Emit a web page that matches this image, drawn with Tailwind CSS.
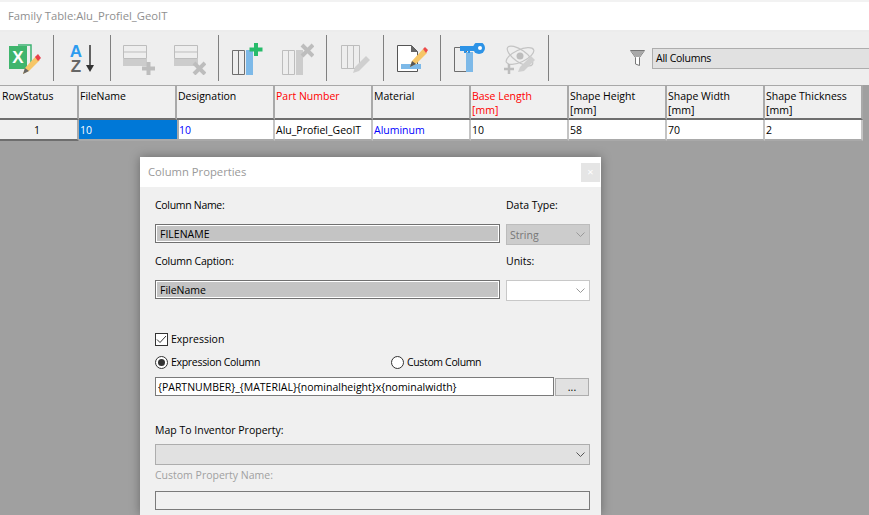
<!DOCTYPE html>
<html lang="en">
<head>
    <meta charset="UTF-8" />
    <title>Family Table</title>
    <script src="https://cdn.jsdelivr.net/npm/@tailwindcss/browser@4"></script>
</head>
<body class="relative w-[869px] h-[515px] overflow-hidden bg-[#a0a0a0] font-['Open_Sans',sans-serif] text-[10.5px] leading-[14px] text-black">
    <!-- title bar -->
    <div class="h-[32px] bg-white border-t-2 border-t-[#f2f2f2] border-b-2 border-b-[#ececec] pl-2 flex items-center text-[11.25px] text-[#8f8f8f]">Family Table:Alu_Profiel_GeoIT</div>

    <!-- toolbar -->
    <div class="h-[53px] pb-px bg-[#eeeeee] flex items-center">
        <svg class="ml-[9px] mt-[2px] shrink-0" width="32" height="32" viewBox="0 0 32 32">
            <path d="M9 2h13v22H9" fill="none" stroke="#3cb371" stroke-width="1.5"/>
            <rect x="0" y="3" width="18" height="23" fill="#3fb56d"/>
            <text x="9" y="20" text-anchor="middle" font-family="Liberation Sans" font-weight="700" font-size="17" fill="#fff">X</text>
            <path d="M14 31l2-6 11-12 4 4-11 11z" fill="#f6c667"/>
            <path d="M14 31l2-6 4 3z" fill="#666"/>
            <path d="M26 14l3-3 3 4-3 3z" fill="#e8414b"/>
        </svg>
        <div class="ml-[12px] w-px h-[46px] bg-[#808080] shrink-0"></div>
        <svg class="ml-[12px] mt-[2px] shrink-0" width="32" height="32" viewBox="0 0 32 32">
            <text x="10" y="14" text-anchor="middle" font-family="Liberation Sans" font-weight="700" font-size="17" fill="#2d9cf0">A</text>
            <text x="10" y="29" text-anchor="middle" font-family="Liberation Sans" font-weight="700" font-size="17" fill="#666">Z</text>
            <path d="M24 2v22" stroke="#333" stroke-width="1.5"/>
            <path d="M20 22h8l-4 7z" fill="#333"/>
        </svg>
        <div class="ml-[12px] w-px h-[46px] bg-[#808080] shrink-0"></div>
        <svg class="ml-[12px] mt-[2px] shrink-0" width="32" height="32" viewBox="0 0 32 32">
            <path d="M0.500 2.500h23v13h-23zM0.500 9h23" fill="none" stroke="#bdbdbd"/>
            <rect x="0" y="16" width="24" height="7" fill="#cccccc"/>
            <path d="M25.500 19v13M19 25.500h13" stroke="#bdbdbd" stroke-width="4"/>
        </svg>
        <svg class="ml-[19px] mt-[2px] shrink-0" width="32" height="32" viewBox="0 0 32 32">
            <path d="M0.500 2.500h23v13h-23zM0.500 9h23" fill="none" stroke="#bdbdbd"/>
            <rect x="0" y="16" width="24" height="7" fill="#cccccc"/>
            <path d="M20 20l11 11M31 20l-11 11" stroke="#bdbdbd" stroke-width="4"/>
        </svg>
        <div class="ml-[12px] w-px h-[46px] bg-[#808080] shrink-0"></div>
        <svg class="ml-[13px] mt-[2px] shrink-0" width="32" height="32" viewBox="0 0 32 32">
            <path d="M0.500 7.500h12v24h-12zM6.500 7.500v24" fill="none" stroke="#6e6e6e"/>
            <rect x="14" y="7" width="7" height="25" fill="#7db9e8"/>
            <path d="M24 0v13M17.500 6.500h13" stroke="#27bb6a" stroke-width="4"/>
        </svg>
        <svg class="ml-[18px] mt-[2px] shrink-0" width="32" height="32" viewBox="0 0 32 32">
            <path d="M0.500 7.500h12v24h-12zM6.500 7.500v24" fill="none" stroke="#bdbdbd"/>
            <rect x="14" y="7" width="7" height="25" fill="#cccccc"/>
            <path d="M20 2l11 11M31 2l-11 11" stroke="#bdbdbd" stroke-width="4"/>
        </svg>
        <div class="ml-[12px] w-px h-[46px] bg-[#808080] shrink-0"></div>
        <svg class="ml-[13px] mt-[2px] shrink-0" width="32" height="32" viewBox="0 0 32 32">
            <path d="M1.500 2.500h18v23h-18zM7.500 2.500v23M13.500 2.500v23" fill="none" stroke="#bdbdbd"/>
            <path d="M13 30l2-6 11-11 4 4-11 11z" fill="#cfcfcf"/>
        </svg>
        <div class="ml-[11px] w-px h-[46px] bg-[#808080] shrink-0"></div>
        <svg class="ml-[13px] mt-[2px] shrink-0" width="32" height="32" viewBox="0 0 32 32">
            <path d="M0.500 2.500h14l6 6v20h-20z" fill="#fff" stroke="#555"/>
            <path d="M14 2l7 7h-7z" fill="#666"/>
            <rect x="4" y="21" width="20" height="5" fill="#7db9e8"/>
            <path d="M13 24l2-6 11-12 4 4-11 11z" fill="#f6c667"/>
            <path d="M13 24l2-6 4 3z" fill="#555"/>
            <path d="M26 6l2-2 3 3-2 3z" fill="#ec4a4a"/>
        </svg>
        <div class="ml-[11px] w-px h-[46px] bg-[#808080] shrink-0"></div>
        <svg class="ml-[13px] mt-[2px] shrink-0" width="32" height="32" viewBox="0 0 32 32">
            <path d="M0.500 4.500h12v24h-12z" fill="none" stroke="#6e6e6e"/>
            <rect x="12" y="9" width="7" height="20" fill="#7db9e8"/>
            <path d="M6 3h16v5h-6v2h-2V8h-2v2h-2V8H6z" fill="#2d93e6"/>
            <circle cx="25" cy="5" r="6" fill="#2d93e6"/>
            <circle cx="26" cy="5" r="2" fill="#fff"/>
        </svg>
        <svg class="ml-[18px] mt-[2px] shrink-0" width="32" height="32" viewBox="0 0 32 32">
            <g fill="none" stroke="#c4c4c4" stroke-width="1.2">
                <ellipse cx="16" cy="13" rx="15" ry="6" transform="rotate(-25 16 13)"/>
                <ellipse cx="16" cy="13" rx="15" ry="6" transform="rotate(35 16 13)"/>
            </g>
            <circle cx="16" cy="13" r="3.500" fill="#bdbdbd"/>
            <path d="M14 29l2-5 11-11 4 4-11 11z" fill="#cfcfcf"/>
            <path d="M5 21v10M0 26h10" stroke="#bdbdbd" stroke-width="2.500"/>
        </svg>
        <div class="ml-[12px] w-px h-[46px] bg-[#808080] shrink-0"></div>
        <svg class="ml-[81px] shrink-0" width="15" height="16" viewBox="0 0 15 16">
            <path d="M0.500 0.500h14l-5 7v8l-4-1.500v-6.500z" fill="#fff" stroke="#777"/>
            <path d="M1 1h13l-4.500 6h-4z" fill="#a8a8a8"/>
        </svg>
        <div class="ml-[7px] w-[230px] h-[21px] shrink-0 bg-[#e1e1e1] border border-[#adadad] pl-[3px] flex items-center tracking-[-0.25px]">All Columns</div>
    </div>

    <!-- family table -->
    <div class="grid grid-cols-[79px_repeat(8,98px)] w-[863px] border-t border-t-[#a8a8a8]">
        <div class="h-[34px] bg-[#f0f0f0] border-r-2 border-r-[#a9a9a9] border-b-2 border-b-[#6e6e6e] pl-[2px] pt-[3px]">RowStatus</div>
        <div class="h-[34px] bg-[#f0f0f0] border-r-2 border-r-[#a9a9a9] border-b-2 border-b-[#6e6e6e] pl-px pt-[3px]">FileName</div>
        <div class="h-[34px] bg-[#f0f0f0] border-r-2 border-r-[#a9a9a9] border-b-2 border-b-[#6e6e6e] pl-px pt-[3px]">Designation</div>
        <div class="h-[34px] bg-[#f0f0f0] border-r-2 border-r-[#a9a9a9] border-b-2 border-b-[#6e6e6e] pl-px pt-[3px] text-[#ff0000]">Part Number</div>
        <div class="h-[34px] bg-[#f0f0f0] border-r-2 border-r-[#a9a9a9] border-b-2 border-b-[#6e6e6e] pl-px pt-[3px]">Material</div>
        <div class="h-[34px] bg-[#f0f0f0] border-r-2 border-r-[#a9a9a9] border-b-2 border-b-[#6e6e6e] pl-px pt-[3px] text-[#ff0000]">Base Length<br>[mm]</div>
        <div class="h-[34px] bg-[#f0f0f0] border-r-2 border-r-[#a9a9a9] border-b-2 border-b-[#6e6e6e] pl-px pt-[3px]">Shape Height<br>[mm]</div>
        <div class="h-[34px] bg-[#f0f0f0] border-r-2 border-r-[#a9a9a9] border-b-2 border-b-[#6e6e6e] pl-px pt-[3px]">Shape Width<br>[mm]</div>
        <div class="h-[34px] bg-[#f0f0f0] border-r-2 border-r-[#a9a9a9] border-b-2 border-b-[#6e6e6e] pl-px pt-[3px]">Shape Thickness<br>[mm]</div>

        <div class="h-[21px] bg-[#f0f0f0] border-r-2 border-r-[#a9a9a9] border-b-2 border-b-[#6e6e6e] pr-[3px] flex items-center justify-center">1</div>
        <div class="h-[21px] bg-[#0078d7] text-white border-b-2 border-b-[#a9a9a9] pl-px flex items-center">10</div>
        <div class="h-[21px] bg-white text-[#0000ff] border-l-2 border-l-[#a9a9a9] border-r-2 border-r-[#c4c4c4] border-b-2 border-b-[#a9a9a9] flex items-center">10</div>
        <div class="h-[21px] bg-white border-r-2 border-r-[#c4c4c4] border-b-2 border-b-[#a9a9a9] pl-px flex items-center">Alu_Profiel_GeoIT</div>
        <div class="h-[21px] bg-white text-[#0000ff] border-r-2 border-r-[#c4c4c4] border-b-2 border-b-[#a9a9a9] pl-px flex items-center">Aluminum</div>
        <div class="h-[21px] bg-white border-r-2 border-r-[#c4c4c4] border-b-2 border-b-[#a9a9a9] pl-px flex items-center">10</div>
        <div class="h-[21px] bg-white border-r-2 border-r-[#c4c4c4] border-b-2 border-b-[#a9a9a9] pl-px flex items-center">58</div>
        <div class="h-[21px] bg-white border-r-2 border-r-[#c4c4c4] border-b-2 border-b-[#a9a9a9] pl-px flex items-center">70</div>
        <div class="h-[21px] bg-white border-r-2 border-r-[#c4c4c4] border-b-2 border-b-[#a9a9a9] pl-px flex items-center">2</div>
    </div>

    <!-- column properties dialog -->
    <div class="absolute left-[140px] top-[157px] w-[461px] h-[358px] bg-[#f0f0f0] shadow-[0_0_10px_rgba(0,0,0,0.35)]">
        <div class="h-[30px] bg-white pl-2 pr-px flex items-center justify-between text-[11.25px] text-[#999999]">
            <span>Column Properties</span>
            <div class="w-[19px] h-[19px] bg-[#e5e5e5] text-white text-[11px] flex items-center justify-center">×</div>
        </div>
        <div class="pl-[15px] pr-[11px]">
            <div class="grid grid-cols-[345px_84px] gap-x-[6px] mt-[11px]">
                <div class="h-[26px] tracking-[-0.3px]">Column Name:</div>
                <div class="h-[26px]">Data Type:</div>
                <div class="h-[19px] border border-[#707070] outline outline-white -outline-offset-2 bg-[#c4c4c4] pl-[4px] flex items-center">FILENAME</div>
                <div class="h-[21px] bg-[#cccccc] border border-[#bcbcbc] pl-[3px] pr-[4px] flex items-center justify-between text-[#777777]">String
                    <svg width="9" height="6" viewBox="0 0 9 6"><path d="M0.500 0.500l4 4 4-4" fill="none" stroke="#999999"/></svg>
                </div>
                <div class="h-[26px] mt-[9px] tracking-[-0.2px]">Column Caption:</div>
                <div class="h-[26px] mt-[9px]">Units:</div>
                <div class="h-[19px] border border-[#707070] outline outline-white -outline-offset-2 bg-[#c4c4c4] pl-[4px] flex items-center">FileName</div>
                <div class="h-[21px] bg-white border border-[#c8c8c8] pr-[4px] flex items-center justify-end">
                    <svg width="9" height="6" viewBox="0 0 9 6"><path d="M0.500 0.500l4 4 4-4" fill="none" stroke="#999999"/></svg>
                </div>
            </div>
            <div class="flex items-center gap-[3px] h-[14px] mt-[31px]">
                <div class="w-[13px] h-[13px] bg-white border border-[#333333] flex items-center justify-center">
                    <svg width="11" height="9" viewBox="0 0 11 9"><path d="M1 4.500l3 3 6-6.500" fill="none" stroke="#333333"/></svg>
                </div>
                <span>Expression</span>
            </div>
            <div class="flex items-center h-[14px] mt-[9px]">
                <div class="w-[236px] flex items-center gap-[3px]">
                    <div class="w-[13px] h-[13px] rounded-full bg-white border border-[#333333] flex items-center justify-center">
                        <div class="w-[7px] h-[7px] rounded-full bg-[#333333]"></div>
                    </div>
                    <span class="tracking-[-0.3px]">Expression Column</span>
                </div>
                <div class="flex items-center gap-[3px]">
                    <div class="w-[13px] h-[13px] rounded-full bg-white border border-[#333333]"></div>
                    <span class="tracking-[-0.35px]">Custom Column</span>
                </div>
            </div>
            <div class="flex items-center gap-px mt-[8px]">
                <div class="w-[399px] h-[19px] bg-white border border-[#7a7a7a] pl-[2px] flex items-center">{PARTNUMBER}_{MATERIAL}{nominalheight}x{nominalwidth}</div>
                <div class="w-[34px] h-[18px] bg-[#e1e1e1] border border-[#adadad] flex items-center justify-center">...</div>
            </div>
            <div class="h-[14px] mt-[27px]">Map To Inventor Property:</div>
            <div class="h-[21px] mt-[7px] bg-[#e1e1e1] border border-[#adadad] pr-[4px] flex items-center justify-end">
                <svg width="9" height="6" viewBox="0 0 9 6"><path d="M0.500 0.500l4 4 4-4" fill="none" stroke="#555555"/></svg>
            </div>
            <div class="h-[14px] mt-[3px] text-[#a0a0a0]">Custom Property Name:</div>
            <div class="h-[19px] mt-[9px] bg-[#f0f0f0] border border-[#7a7a7a]"></div>
        </div>
    </div>
</body>
</html>
